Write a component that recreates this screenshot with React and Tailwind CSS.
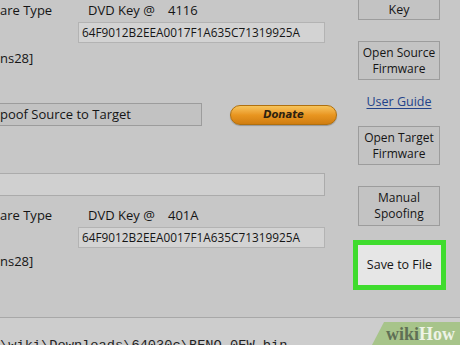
import React from 'react';

const Btn = ({ lines, className = '' }) => (
  <div
    className={`w-[82px] h-[39px] bg-[#c3c3c3] border border-[#9c9c9c] flex flex-col items-center justify-center text-[12px] text-[#151515] ${className}`}
  >
    {lines.map((l) => (
      <div key={l} className="h-[16px] leading-[16px]">{l}</div>
    ))}
  </div>
);

const KeyBox = ({ value }) => (
  <div className="ml-[78px] w-[247px] h-[21px] bg-[#d3d3d3] border border-[#b3b3b3] flex items-center pl-[3px] text-[11.8px] text-[#151515]">
    {value}
  </div>
);

const TypeRow = ({ addr }) => (
  <div className="h-[22px] flex items-center text-[13px] text-[#151515]">
    <span className="w-[88px]">are Type</span>
    <span className="w-[80px]">DVD Key @</span>
    <span>{addr}</span>
  </div>
);

export default function App() {
  return (
    <div
      className="relative w-[460px] h-[345px] overflow-hidden bg-[#c7c7c7]"
      style={{ fontFamily: '"Open Sans", "Noto Sans", sans-serif' }}
    >
      <div className="flex h-[317px]">
        {/* left panel */}
        <div className="w-[345px] flex flex-col">
          <TypeRow addr="4116" />
          <KeyBox value="64F9012B2EEA0017F1A635C71319925A" />
          <div className="mt-[6px] h-[18px] leading-[18px] text-[13px] text-[#151515]">ns28]</div>

          <div className="mt-[36px] flex items-center">
            <div className="w-[202px] h-[23px] bg-[#c2c2c2] border border-[#9c9c9c] border-l-0 flex items-center text-[13px] text-[#151515]">
              poof Source to Target
            </div>
            <div className="ml-[28px] w-[107px] h-[20px] rounded-full border border-[#b0700e] bg-gradient-to-b from-[#f6c45a] via-[#e99620] to-[#d07d10] flex items-center justify-center shadow-[0_1px_1px_rgba(0,0,0,0.25)]">
              <span className="text-[10px] font-bold italic text-[#2d2210]" style={{ fontFamily: '"DejaVu Sans", Verdana, sans-serif' }}>
                Donate
              </span>
            </div>
          </div>

          <div className="mt-[47px] w-[325px] h-[23px] bg-[#d0d0d0] border border-[#ababab] border-l-0" />

          <div className="mt-[9px]">
            <TypeRow addr="401A" />
          </div>
          <KeyBox value="64F9012B2EEA0017F1A635C71319925A" />
          <div className="mt-[4px] h-[18px] leading-[18px] text-[13px] text-[#151515]">ns28]</div>
        </div>

        {/* right panel */}
        <div className="flex-1 flex flex-col pl-[13px]">
          <div className="-mt-[19px] w-[82px] h-[39px] bg-[#c3c3c3] border border-[#9c9c9c] flex flex-col items-center justify-end pb-[2px] text-[12.5px] text-[#151515]">
            <div className="h-[15px] leading-[15px]">Key</div>
          </div>
          <Btn lines={['Open Source', 'Firmware']} className="mt-[21px]" />
          <div className="mt-[14px] h-[16px] w-[82px] flex justify-center">
            <span className="text-[12.5px] leading-[16px] text-[#23428a] underline underline-offset-2">User Guide</span>
          </div>
          <Btn lines={['Open Target', 'Firmware']} className="mt-[16px]" />
          <Btn lines={['Manual', 'Spoofing']} className="mt-[21px] h-[40px]" />
          <div className="-ml-[5px] mt-[14px] w-[93px] h-[50px] border-[5px] border-[#3fdc2e] bg-[#e6e6e6] flex items-center justify-center text-[12.5px] text-[#151515]">
            Save to File
          </div>
        </div>
      </div>

      {/* path bar */}
      <div className="h-[28px] border-t border-[#a8a8a8] bg-[#cdcdcd] pt-[21px]">
        <div className="text-[13.7px] leading-[14px] text-[#222] whitespace-nowrap" style={{ fontFamily: '"Liberation Mono", monospace' }}>
          \wiki\Downloads\64030c\BENQ_0EW.bin
        </div>
      </div>

      {/* watermark */}
      <div className="absolute right-0 bottom-0 w-[88px] h-[23px]">
        <svg width="88" height="23" className="absolute inset-0">
          <polygon points="12,0 88,0 88,23 0,23" fill="#a7c48a" />
        </svg>
        <div className="relative flex items-center justify-end pr-[5px] h-full text-[18px] font-bold leading-none" style={{ fontFamily: '"Liberation Serif", serif' }}>
          <span className="text-[#5f6f55]">wiki</span>
          <span className="text-[#eef3e6]">How</span>
        </div>
      </div>
    </div>
  );
}
